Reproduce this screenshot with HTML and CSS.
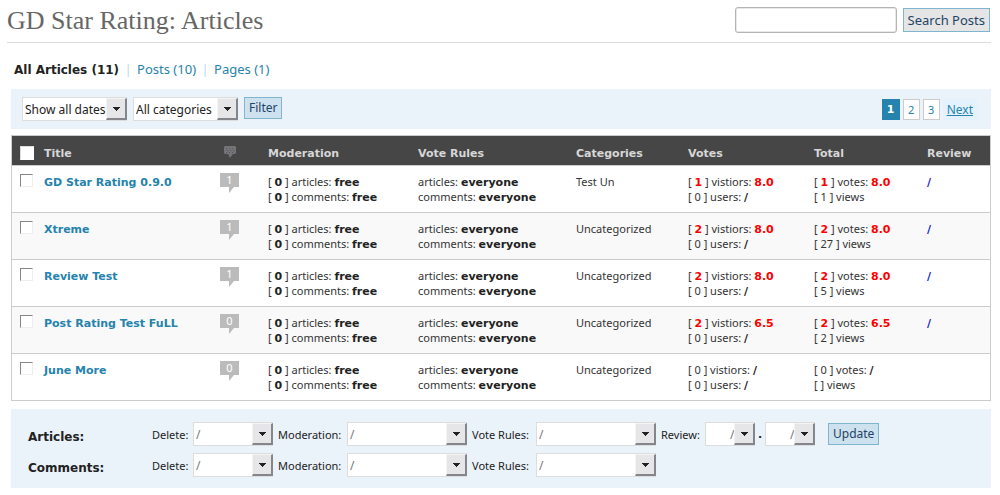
FILE: index.html
```html
<!DOCTYPE html>
<html lang="en">
<head>
<meta charset="utf-8">
<title>GD Star Rating: Articles</title>
<link rel="stylesheet" href="styles.css">
</head>
<body>
<header class="page-head">
  <h1>GD Star Rating: Articles</h1>
  <form class="search">
    <input class="search-box" type="text" aria-label="Search">
    <button class="search-button" type="button">Search Posts</button>
  </form>
</header>
<main class="content">
  <nav class="views">
    <a class="current" href="#">All Articles (11)</a><span class="sep">|</span><a href="#">Posts (10)</a><span class="sep">|</span><a href="#">Pages (1)</a>
  </nav>
  <div class="filter-bar">
    <span class="select w-date"><select aria-label="Dates"><option>Show all dates</option></select></span>
    <span class="select w-date"><select aria-label="Categories"><option>All categories</option></select></span>
    <button class="button" type="button">Filter</button>
    <nav class="pages" aria-label="Pages">
      <span class="page active">1</span><a class="page" href="#">2</a><a class="page" href="#">3</a><a class="next" href="#">Next</a>
    </nav>
  </div>
  <table class="articles">
    <colgroup><col class="c-check"><col><col class="c-count"><col class="c-mod"><col class="c-rules"><col class="c-cat"><col class="c-votes"><col class="c-total"><col class="c-review"></colgroup>
    <thead>
      <tr>
        <th><input type="checkbox" aria-label="Select all"></th>
        <th>Title</th>
        <th><svg class="comment-icon" width="12" height="12" viewBox="0 0 12 12" role="img" aria-label="Comments"><path d="M1 0h10l1 1v6l-1 1H9L6 12 4 8H1L0 7V1z" fill="#737378"/><path d="M2 2.500h1m2 0h1m2 0h1M3 4.500h1m2 0h1m2 0h1M2 6.500h1m2 0h1m2 0h1" stroke="#58585d"/></svg></th>
        <th>Moderation</th><th>Vote Rules</th><th>Categories</th><th>Votes</th><th>Total</th><th>Review</th>
      </tr>
    </thead>
    <tbody>
      <tr>
        <td><input type="checkbox" aria-label="Select GD Star Rating 0.9.0"></td>
        <td><a class="title" href="#">GD Star Rating 0.9.0</a></td>
        <td><span class="bubble">1</span></td>
        <td>[ <b>0</b> ] articles: <b>free</b><br>[ <b>0</b> ] comments: <b>free</b></td>
        <td>articles: <b>everyone</b><br>comments: <b>everyone</b></td>
        <td>Test Un</td>
        <td>[ <b class="hot">1</b> ] vistiors: <b class="hot">8.0</b><br>[ 0 ] users: <b>/</b></td>
        <td>[ <b class="hot">1</b> ] votes: <b class="hot">8.0</b><br>[ 1 ] views</td>
        <td><b class="review">/</b></td>
      </tr>
      <tr>
        <td><input type="checkbox" aria-label="Select Xtreme"></td>
        <td><a class="title" href="#">Xtreme</a></td>
        <td><span class="bubble">1</span></td>
        <td>[ <b>0</b> ] articles: <b>free</b><br>[ <b>0</b> ] comments: <b>free</b></td>
        <td>articles: <b>everyone</b><br>comments: <b>everyone</b></td>
        <td>Uncategorized</td>
        <td>[ <b class="hot">2</b> ] vistiors: <b class="hot">8.0</b><br>[ 0 ] users: <b>/</b></td>
        <td>[ <b class="hot">2</b> ] votes: <b class="hot">8.0</b><br>[ 27 ] views</td>
        <td><b class="review">/</b></td>
      </tr>
      <tr>
        <td><input type="checkbox" aria-label="Select Review Test"></td>
        <td><a class="title" href="#">Review Test</a></td>
        <td><span class="bubble">1</span></td>
        <td>[ <b>0</b> ] articles: <b>free</b><br>[ <b>0</b> ] comments: <b>free</b></td>
        <td>articles: <b>everyone</b><br>comments: <b>everyone</b></td>
        <td>Uncategorized</td>
        <td>[ <b class="hot">2</b> ] vistiors: <b class="hot">8.0</b><br>[ 0 ] users: <b>/</b></td>
        <td>[ <b class="hot">2</b> ] votes: <b class="hot">8.0</b><br>[ 5 ] views</td>
        <td><b class="review">/</b></td>
      </tr>
      <tr>
        <td><input type="checkbox" aria-label="Select Post Rating Test FuLL"></td>
        <td><a class="title" href="#">Post Rating Test FuLL</a></td>
        <td><span class="bubble">0</span></td>
        <td>[ <b>0</b> ] articles: <b>free</b><br>[ <b>0</b> ] comments: <b>free</b></td>
        <td>articles: <b>everyone</b><br>comments: <b>everyone</b></td>
        <td>Uncategorized</td>
        <td>[ <b class="hot">2</b> ] vistiors: <b class="hot">6.5</b><br>[ 0 ] users: <b>/</b></td>
        <td>[ <b class="hot">2</b> ] votes: <b class="hot">6.5</b><br>[ 2 ] views</td>
        <td><b class="review">/</b></td>
      </tr>
      <tr>
        <td><input type="checkbox" aria-label="Select June More"></td>
        <td><a class="title" href="#">June More</a></td>
        <td><span class="bubble">0</span></td>
        <td>[ <b>0</b> ] articles: <b>free</b><br>[ <b>0</b> ] comments: <b>free</b></td>
        <td>articles: <b>everyone</b><br>comments: <b>everyone</b></td>
        <td>Uncategorized</td>
        <td>[ 0 ] vistiors: <b>/</b><br>[ 0 ] users: <b>/</b></td>
        <td>[ 0 ] votes: <b>/</b><br>[ ] views</td>
        <td></td>
      </tr>
    </tbody>
  </table>
  <form class="bulk">
    <div class="bulk-row">
      <strong class="bulk-name">Articles:</strong>
      <label class="l-delete" for="a-delete">Delete:</label>
      <span class="select w-delete"><select id="a-delete"><option>/</option></select></span>
      <label class="l-mod" for="a-mod">Moderation:</label>
      <span class="select w-wide"><select id="a-mod"><option>/</option></select></span>
      <label class="l-rules" for="a-rules">Vote Rules:</label>
      <span class="select w-wide"><select id="a-rules"><option>/</option></select></span>
      <label class="l-review" for="a-review">Review:</label>
      <span class="select w-small"><select id="a-review"><option>/</option></select></span>
      <b class="dot">.</b>
      <span class="select w-small"><select aria-label="Review decimal"><option>/</option></select></span>
      <button class="button update" type="button">Update</button>
    </div>
    <div class="bulk-row">
      <strong class="bulk-name">Comments:</strong>
      <label class="l-delete" for="c-delete">Delete:</label>
      <span class="select w-delete"><select id="c-delete"><option>/</option></select></span>
      <label class="l-mod" for="c-mod">Moderation:</label>
      <span class="select w-wide"><select id="c-mod"><option>/</option></select></span>
      <label class="l-rules" for="c-rules">Vote Rules:</label>
      <span class="select w-wide"><select id="c-rules"><option>/</option></select></span>
    </div>
  </form>
</main>
</body>
</html>
```
FILE: styles.css
```css
* { box-sizing: border-box; }

body {
  margin: 0;
  padding: 0 9px 0 7px;
  background: #fff;
  color: #333;
  font: 11px/15px "Noto Sans", sans-serif;
}

a { color: #2583ad; text-decoration: none; }
b, strong, th { font-family: "DejaVu Sans", sans-serif; font-weight: bold; }
b, strong { color: #222; }
button, input, select { font-family: inherit; margin: 0; }

.page-head {
  display: flex;
  justify-content: space-between;
  height: 43px;
  border-bottom: 1px solid #dadada;
}

h1 {
  margin: 0;
  padding-top: 5px;
  color: #666;
  font: 26px/32px "Liberation Serif", serif;
}

.search { display: flex; align-items: center; gap: 6px; padding: 7px 1px 9px 0; }

.search-box {
  width: 162px;
  height: 26px;
  padding: 2px 4px;
  border: 1px solid #b4b4b4;
  border-radius: 3px;
  box-shadow: inset 0 0 0 1px #e8e8e8;
  font-size: 13px;
}

.search-button {
  height: 24px;
  padding: 0 4px;
  border: 1px solid #80b5d0;
  background: #e5e5e5;
  color: #224466;
  font-size: 13px;
  line-height: 20px;
}

.content { padding-left: 4px; }

.views { display: flex; align-items: flex-start; padding: 17px 3px 9px; font-size: 13px; line-height: 18px; }
.views .current { color: #222; font: bold 12px/20px "DejaVu Sans", sans-serif; }
.sep { width: 18px; color: #b5dcec; text-align: center; }

.filter-bar {
  display: flex;
  align-items: flex-start;
  gap: 6px;
  height: 40px;
  padding: 8px 14px 8px 11px;
  background: #eaf3fa;
}

.select { position: relative; display: flex; height: 24px; }

.select select {
  appearance: none;
  width: 100%;
  height: 24px;
  padding: 1px 18px 0 2px;
  border: 1px solid #ddd;
  border-radius: 0;
  background: #fff;
  color: #222;
  font-size: 12px;
}

.select::after {
  content: "";
  position: absolute;
  inset: 1px 0 1px auto;
  width: 18px;
  border: 1px solid;
  border-color: #f4f4f4 #85858c #85858c #f4f4f4;
  border-width: 1px 2px 2px 1px;
  background: linear-gradient(#222, #222) 50% 8px / 7px 1px no-repeat,
    linear-gradient(#222, #222) 50% 9px / 5px 1px no-repeat,
    linear-gradient(#222, #222) 50% 10px / 3px 1px no-repeat,
    linear-gradient(#222, #222) 50% 11px / 1px 1px no-repeat,
    #e6e6e8;
  pointer-events: none;
}

.w-date { width: 105px; }
.w-delete { width: 80px; }
.w-wide { width: 120px; }
.w-small { width: 50px; }
.w-small select { padding-left: 24px; }

.button {
  height: 22px;
  padding: 0 4px;
  border: 1px solid #80b5d0;
  background: #cee1ef;
  color: #224466;
  font-size: 12px;
  line-height: 18px;
}

.pages { display: flex; gap: 3px; margin-left: auto; padding-top: 2px; line-height: 19px; }
.page { width: 17px; border: 1px solid #ccc; background: #fff; text-align: center; }
.page.active {
  width: 18px;
  border-color: #2583ad;
  background: #2583ad;
  color: #fff;
  font-family: "DejaVu Sans", sans-serif;
  font-weight: bold;
}
.next { padding: 1px 4px; background: #e4f2fd; font-size: 12px; text-decoration: underline; }

.articles {
  width: 100%;
  margin-top: 6px;
  border: 1px solid #ccc;
  border-collapse: separate;
  border-spacing: 0;
  table-layout: fixed;
}

.c-check { width: 24px; }
.c-count { width: 48px; }
.c-mod { width: 150px; }
.c-rules { width: 158px; }
.c-cat { width: 112px; }
.c-votes { width: 126px; }
.c-total { width: 113px; }
.c-review { width: 71px; }

th, td { padding: 8px 0 8px 8px; text-align: left; vertical-align: top; }
th { padding: 10px 0 4px 8px; background: #464646; color: #d7d7d7; }
td { border-top: 1px solid #ccc; white-space: nowrap; }
td b, td .title { line-height: 11px; }
tbody tr:nth-child(even) { background: #f9f9f9; }

input[type="checkbox"] {
  appearance: none;
  display: block;
  width: 13px;
  height: 13px;
  border: 1px solid;
  border-color: #85858c #eee #eee #85858c;
  background: #fff;
}
th input[type="checkbox"] { width: 14px; height: 14px; border-color: #ddd #fff #fff #ddd; }

.title { font-family: "DejaVu Sans", sans-serif; font-weight: bold; }
.comment-icon { display: block; margin-left: 4px; }

.bubble {
  position: relative;
  display: block;
  width: 19px;
  height: 14px;
  margin-top: -1px;
  background: #bbb;
  color: #fff;
  line-height: 14px;
  text-align: center;
}
.bubble::after {
  content: "";
  position: absolute;
  top: 14px;
  left: 9px;
  border-top: 6px solid #bbb;
  border-right: 5px solid transparent;
}

.hot { color: #f00; }
.review { color: #2222c8; }

.bulk {
  display: grid;
  gap: 7px;
  margin-top: 8px;
  padding: 13px 17px 11px;
  background: #eaf3fa;
}
.bulk-row { display: flex; align-items: center; }
.bulk-name { width: 124px; padding-top: 7px; font-size: 12px; }
.bulk-row label { color: #222; }
.l-delete { width: 41px; }
.l-mod { width: 74px; padding-left: 5px; }
.l-rules { width: 69px; padding-left: 5px; }
.l-review { width: 49px; padding-left: 5px; }
.dot { width: 10px; text-align: center; }
.update { margin-left: 13px; }
.bulk select { color: #777; }
```
